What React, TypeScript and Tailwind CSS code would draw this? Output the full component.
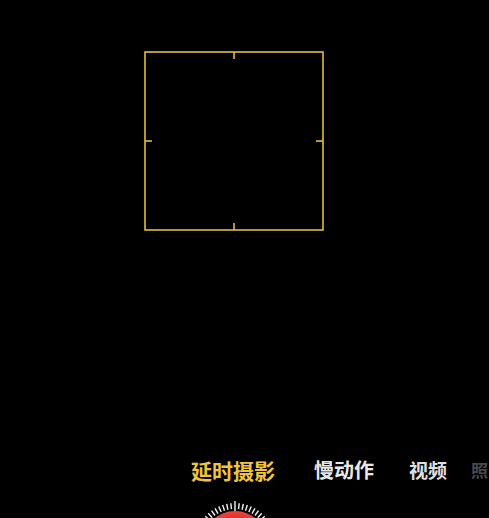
const ticks = Array.from({ length: 60 }, (_, i) => i * 6);

function FocusFrame() {
  return (
    <svg width="180" height="180" viewBox="0 0 180 180" className="block">
      <rect x="1" y="1" width="178" height="178" fill="none" stroke="#dfbf3e" strokeWidth="1.6" />
      <line x1="90" y1="1" x2="90" y2="8" stroke="#dfbf3e" strokeWidth="1.6" />
      <line x1="90" y1="172" x2="90" y2="179" stroke="#dfbf3e" strokeWidth="1.6" />
      <line x1="1" y1="90" x2="8" y2="90" stroke="#dfbf3e" strokeWidth="1.6" />
      <line x1="172" y1="90" x2="179" y2="90" stroke="#dfbf3e" strokeWidth="1.6" />
    </svg>
  );
}

function ShutterButton() {
  return (
    <svg width="90" height="90" viewBox="-45 -45 90 90" className="block">
      <defs>
        <radialGradient id="shutterRed" cx="50%" cy="55%" r="55%">
          <stop offset="0%" stopColor="#b81d1d" />
          <stop offset="80%" stopColor="#e0302a" />
          <stop offset="100%" stopColor="#f0443a" />
        </radialGradient>
      </defs>
      {ticks.map((deg) => {
        const a = ((deg - 90) * Math.PI) / 180;
        const long = deg === 0;
        const r1 = long ? 32 : 34;
        const r2 = long ? 42 : 40;
        return (
          <line
            key={deg}
            x1={Math.cos(a) * r1}
            y1={Math.sin(a) * r1}
            x2={Math.cos(a) * r2}
            y2={Math.sin(a) * r2}
            stroke="#f2f2f2"
            strokeWidth="1.4"
          />
        );
      })}
      <circle cx="0" cy="0" r="32" fill="url(#shutterRed)" />
    </svg>
  );
}

export default function App() {
  return (
    <div
      className="h-[518px] w-[489px] overflow-hidden bg-black"
      style={{ fontFamily: '"Noto Sans CJK SC", "Noto Sans", sans-serif' }}
    >
      <div className="ml-[144px] pt-[51px]">
        <FocusFrame />
      </div>

      <div className="mt-[227px] flex h-6 items-center whitespace-nowrap leading-6">
        <span className="ml-[191px] text-[21px] font-bold text-[#f0c43c]">延时摄影</span>
        <span className="ml-[39px] text-[20px] font-semibold text-[#e8e8e8]">慢动作</span>
        <span className="ml-[35px] text-[19px] font-semibold text-[#e0e0e0]">视频</span>
        <span className="ml-[24px] text-[17px] font-semibold text-[#4a4a4a]">照</span>
      </div>

      <div className="ml-[190px] mt-4">
        <ShutterButton />
      </div>
    </div>
  );
}
